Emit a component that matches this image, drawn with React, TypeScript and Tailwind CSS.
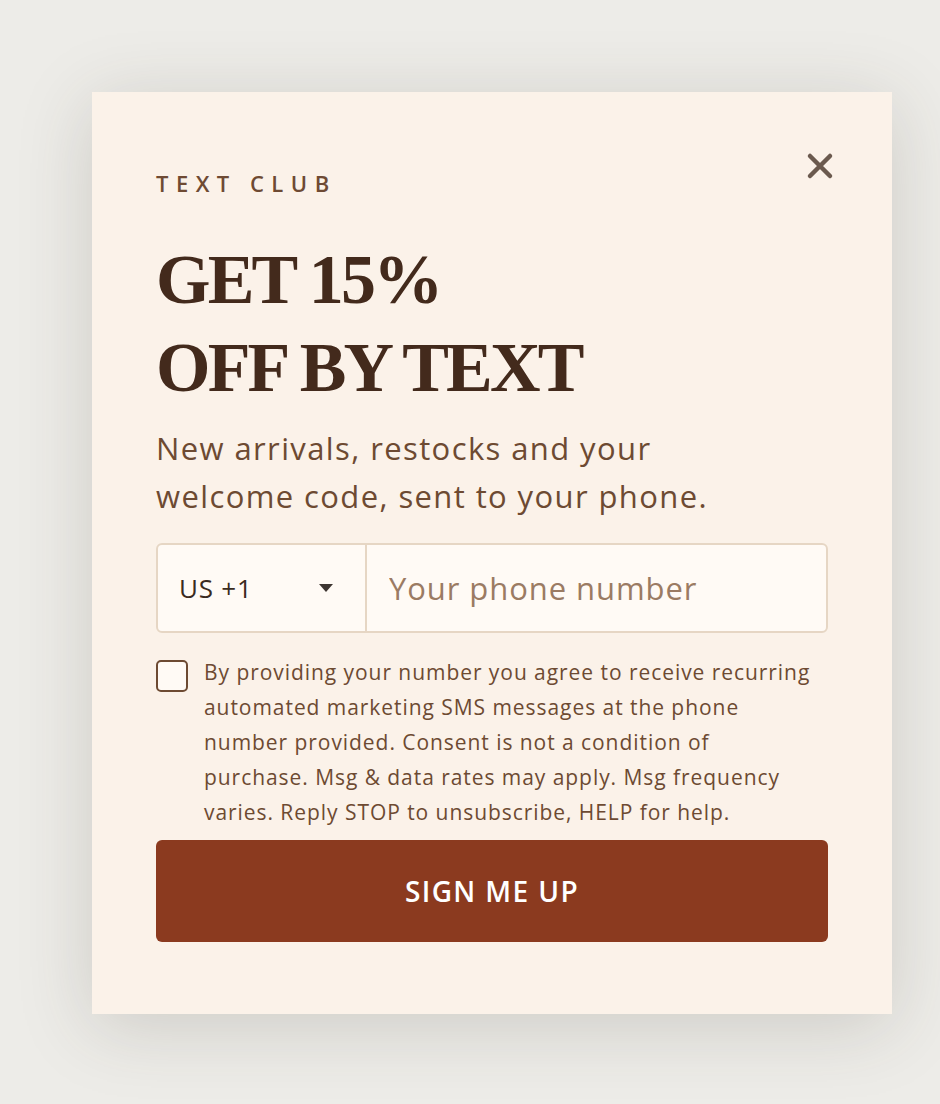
import { useState } from "react";

const App = () => {
  const [aceito, setAceito] = useState(false);
  const [telefone, setTelefone] = useState("");

  return (
    <div className="min-h-[1104px] w-[940px] bg-[#edece8] pt-[92px] pl-[92px] [font-family:'Open_Sans',sans-serif]">
      <div className="relative w-[800px] bg-[#fbf2e9] px-16 pt-[76px] pb-[72px] shadow-[0_12px_70px_rgba(60,55,45,0.18)]">
        {/* Fechar */}
        <button className="absolute right-[58px] top-[60px] flex h-7 w-7 items-center justify-center text-[#6b5a4e]">
          <svg viewBox="0 0 28 28" className="h-7 w-7" fill="none" stroke="currentColor" strokeWidth="4.5" strokeLinecap="round">
            <path d="M4 4 L24 24 M24 4 L4 24" />
          </svg>
        </button>

        <p className="text-[22px] leading-[30px] font-semibold tracking-[0.34em] text-[#6e4a33]">TEXT CLUB</p>

        <h1 className="mt-[38px] text-[70px] leading-[88px] font-bold tracking-[-0.04em] text-[#432a1c] [font-family:'Liberation_Serif',serif]">
          GET 15%
          <br />
          OFF BY TEXT
        </h1>

        <p className="mt-[12px] w-[590px] text-[31px] leading-[48px] tracking-[0.045em] text-[#6d4a32]">
          New arrivals, restocks and your welcome code, sent to your phone.
        </p>

        {/* Telefone */}
        <div className="mt-[23px] flex h-[90px] w-full overflow-hidden rounded-md border-2 border-[#e6d6c4] bg-[#fffaf5]">
          <div className="flex w-[209px] items-center justify-between border-r-2 border-[#e6d6c4] pl-[21px] pr-[32px]">
            <span className="text-[26px] tracking-[0.03em] text-[#3a2a20]">US +1</span>
            <svg viewBox="0 0 14 8" className="h-[8px] w-[14px]" fill="#3d3531">
              <path d="M0 0 H14 L7 8 Z" />
            </svg>
          </div>
          <input
            type="text"
            value={telefone}
            onChange={(e) => setTelefone(e.target.value)}
            placeholder="Your phone number"
            className="flex-1 bg-transparent pl-[22px] text-[31px] tracking-[0.03em] text-[#3a2a20] outline-none placeholder:text-[#9b7b63]"
          />
        </div>

        {/* Consentimento */}
        <div className="mt-[22px] flex gap-4">
          <button
            onClick={() => setAceito(!aceito)}
            className="mt-[5px] h-8 w-8 shrink-0 rounded-[5px] border-2 border-[#6d4a32] bg-[#fffaf5] text-[#6d4a32]"
          >
            {aceito && "✓"}
          </button>
          <p className="w-[612px] text-[21px] leading-[35px] tracking-[0.045em] text-[#6d4a32]">
            By providing your number you agree to receive recurring automated marketing SMS messages at the phone number provided. Consent is not a condition of purchase. Msg &amp; data rates may apply. Msg frequency varies. Reply STOP to unsubscribe, HELP for help.
          </p>
        </div>

        <button className="mt-[10px] flex h-[102px] w-full items-center justify-center rounded-md bg-[#8b3a1f] text-[28px] font-semibold tracking-[0.05em] text-white">
          SIGN ME UP
        </button>
      </div>
    </div>
  );
};

export default App;
